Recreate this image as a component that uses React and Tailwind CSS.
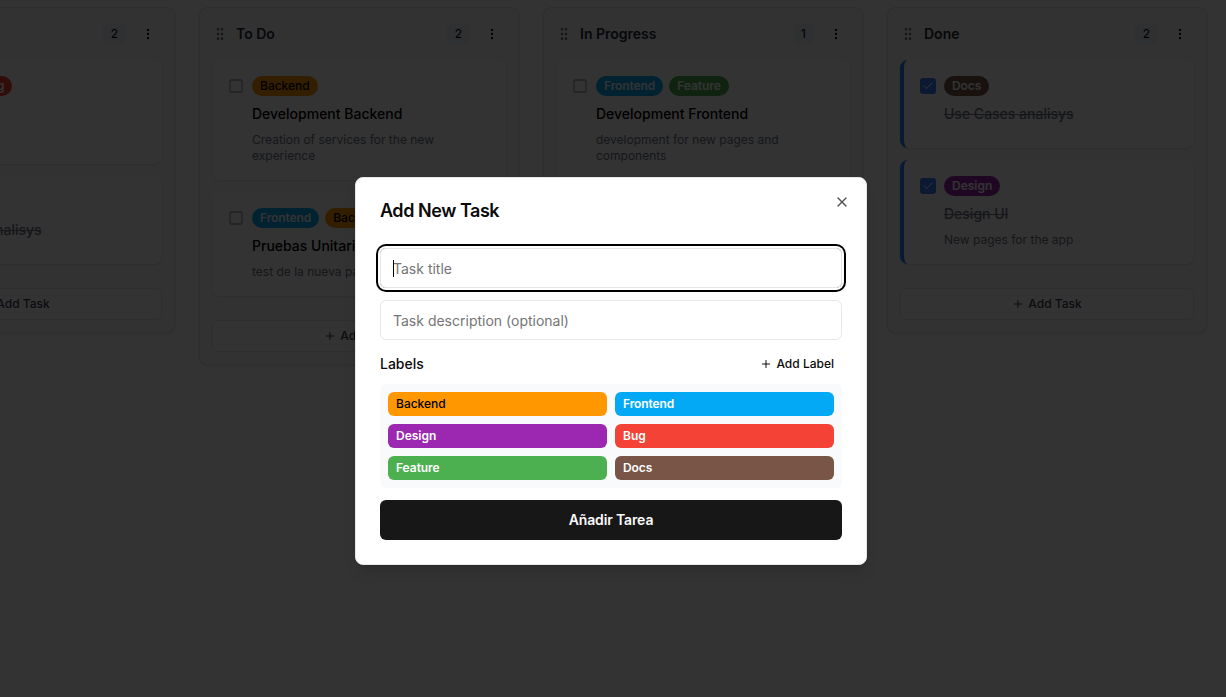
import React from "react";
import { Check, EllipsisVertical, GripVertical, Plus, Square, X } from "lucide-react";

const LABELS = {
  Backend: "bg-[#ff9800] text-black font-medium",
  Frontend: "bg-[#03a9f4] text-white font-semibold tracking-[-0.008em]",
  Design: "bg-[#9c27b0] text-white font-semibold",
  Bug: "bg-[#f44336] text-white font-semibold",
  Feature: "bg-[#4caf50] text-white font-semibold tracking-[-0.004em]",
  Docs: "bg-[#795548] text-white font-semibold tracking-[-0.008em]",
};

const COLUMNS = [
  {
    title: "Backlog",
    tasks: [
      { labels: ["Feature", "Bug"], title: "Review", description: "Check the flow" },
      { labels: ["Docs"], title: "Use Cases analisys", done: true },
    ],
  },
  {
    title: "To Do",
    tasks: [
      { labels: ["Backend"], title: "Development Backend", description: "Creation of services for the new experience" },
      { labels: ["Frontend", "Backend"], title: "Pruebas Unitarias", description: "test de la nueva pagina" },
    ],
  },
  {
    title: "In Progress",
    tasks: [
      { labels: ["Frontend", "Feature"], title: "Development Frontend", description: "development for new pages and components" },
    ],
  },
  {
    title: "Done",
    tasks: [
      { labels: ["Docs"], title: "Use Cases analisys", done: true },
      { labels: ["Design"], title: "Design UI", description: "New pages for the app", done: true },
    ],
  },
];

function TaskCard({ task }) {
  return (
    <article
      className={`flex gap-2 rounded-lg bg-white p-4 shadow-sm ${task.done ? "border-l-4 border-blue-500" : ""}`}
    >
      <div className="flex h-5 w-4 shrink-0 items-center">
        {task.done ? (
          <span className="flex size-4 items-center justify-center rounded-[3px] bg-[#3f7cf8] text-white">
            <Check size={12} />
          </span>
        ) : (
          <Square size={16} className="text-gray-400" />
        )}
      </div>
      <div className="min-w-0 flex-1">
        <div className="flex h-5 gap-1.5">
          {task.labels.map((name) => (
            <span key={name} className={`rounded-full px-2 text-xs leading-5 ${LABELS[name]}`}>
              {name}
            </span>
          ))}
        </div>
        <h3
          className={`mt-2 text-sm leading-5 font-medium ${task.done ? "text-gray-500 line-through" : "text-black"}`}
        >
          {task.title}
        </h3>
        <p className="mt-2 text-xs leading-4 text-gray-500">{task.description}</p>
      </div>
    </article>
  );
}

function Column({ column }) {
  return (
    <section className="w-80 shrink-0 rounded-lg border border-gray-200 bg-gray-50 p-3 shadow-sm">
      <header className="mb-3 flex h-7 items-center">
        <GripVertical size={16} className="mr-2 text-gray-500" />
        <h2 className="flex-1 text-sm font-semibold text-gray-800">{column.title}</h2>
        <span className="mr-2 rounded bg-[#eceef8] px-2 text-xs leading-5 text-black">
          {column.tasks.length}
        </span>
        <button className="flex size-7 items-center justify-center">
          <EllipsisVertical size={14} />
        </button>
      </header>
      <div className="flex flex-col gap-3">
        {column.tasks.map((task) => (
          <TaskCard key={task.title} task={task} />
        ))}
      </div>
      <button className="mt-6 flex h-8 w-full items-center justify-center gap-1 rounded-md border border-gray-200 bg-white text-xs font-medium text-gray-700">
        <Plus size={12} />
        Add Task
      </button>
    </section>
  );
}

function AddTaskDialog() {
  return (
    <div
      role="dialog"
      className="absolute top-[177px] left-[355px] w-[512px] rounded-lg border border-gray-200 bg-white p-6 shadow-lg"
    >
      <h2 className="text-lg leading-none font-semibold tracking-tight">Add New Task</h2>
      <button className="absolute top-4 right-4 opacity-70">
        <X size={16} />
      </button>
      <div className="mt-7 flex flex-col gap-3">
        <div className="relative">
          <input
            placeholder="Task title"
            className="block h-10 w-full rounded-md border border-gray-200 px-3 text-sm ring-2 ring-black ring-offset-2 outline-none placeholder:text-[#757575]"
          />
          <span className="absolute top-3 left-[13px] h-[17px] w-px bg-black" />
        </div>
        <input
          placeholder="Task description (optional)"
          className="block h-10 w-full rounded-md border border-gray-200 px-3 text-sm outline-none placeholder:text-[#757575]"
        />
        <div>
          <div className="flex h-6 items-center justify-between">
            <span className="text-sm font-medium">Labels</span>
            <button className="flex items-center gap-1 px-2 text-xs font-medium">
              <Plus size={12} />
              Add Label
            </button>
          </div>
          <div className="mt-2 grid grid-cols-2 gap-2 rounded-md bg-slate-50 p-2">
            {Object.entries(LABELS).map(([name, style]) => (
              <span key={name} className={`rounded-md px-2 text-xs leading-6 ${style}`}>
                {name}
              </span>
            ))}
          </div>
        </div>
        <button className="h-10 rounded-md bg-neutral-900 text-sm font-semibold tracking-[-0.01em] text-neutral-50">
          Añadir Tarea
        </button>
      </div>
    </div>
  );
}

export default function App() {
  return (
    <div className="relative h-[697px] w-full overflow-hidden bg-white font-['Inter',sans-serif] text-neutral-950">
      <main className="-ml-[145px] flex items-start gap-6 pt-[7px]">
        {COLUMNS.map((column) => (
          <Column key={column.title} column={column} />
        ))}
      </main>
      <div className="absolute inset-0 bg-black/80" />
      <AddTaskDialog />
    </div>
  );
}
